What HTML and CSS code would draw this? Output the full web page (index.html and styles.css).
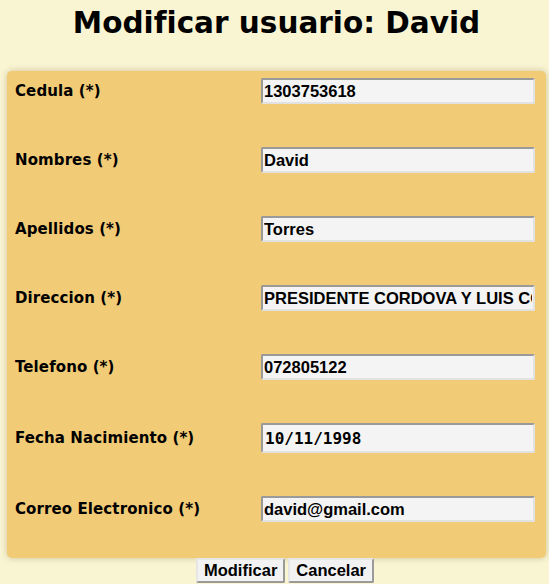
FILE: index.html
```html
<!DOCTYPE html>
<html lang="es">
<head>
<meta charset="utf-8">
<title>Modificar usuario</title>
<link rel="stylesheet" href="styles.css">
</head>
<body>
<h1 class="title">Modificar usuario: David</h1>
<form class="panel">
  <div class="row"><label class="lbl">Cedula (*)</label><input class="field" type="text" value="1303753618"></div>
  <div class="row"><label class="lbl">Nombres (*)</label><input class="field" type="text" value="David"></div>
  <div class="row"><label class="lbl">Apellidos (*)</label><input class="field" type="text" value="Torres"></div>
  <div class="row"><label class="lbl">Direccion (*)</label><input class="field" type="text" value="PRESIDENTE CORDOVA Y LUIS CORDERO"></div>
  <div class="row"><label class="lbl">Telefono (*)</label><input class="field" type="text" value="072805122"></div>
  <div class="row"><label class="lbl">Fecha Nacimiento (*)</label><input class="field date" type="text" value="10/11/1998"></div>
  <div class="row"><label class="lbl">Correo Electronico (*)</label><input class="field" type="text" value="david@gmail.com"></div>
</form>
<div class="actions">
  <button class="btn" type="button">Modificar</button>
  <button class="btn" type="button">Cancelar</button>
</div>
</body>
</html>
```
FILE: styles.css
```css
html, body {
  margin: 0;
  padding: 0;
}
body {
  background: #f9f4d2;
  font-family: "DejaVu Sans", Verdana, sans-serif;
  color: #000;
  padding: 0 3px 0 7px;
}
.title {
  margin: 0;
  padding-top: 5px;
  height: 66px;
  font-size: 29.5px;
  font-weight: bold;
  text-align: center;
  line-height: 36px;
}
.panel {
  background: #f1cb76;
  border-radius: 5px;
  box-shadow: 0 0 6px rgba(120, 100, 40, 0.35);
  padding: 7px 11px 36px 8px;
  display: flex;
  flex-direction: column;
  gap: 43px;
}
.row {
  display: grid;
  grid-template-columns: 246px 1fr;
  align-items: center;
}
.lbl {
  font-size: 15px;
  font-weight: bold;
  letter-spacing: 0.1px;
}
.field {
  box-sizing: border-box;
  width: 274px;
  height: 26px;
  margin: 0;
  padding: 0 1px;
  background: #f4f4f4;
  border: 2px solid #e2e2e2;
  border-top-color: #9a9a9a;
  border-left-color: #9a9a9a;
  border-radius: 2px;
  font-family: "Liberation Sans", Arial, sans-serif;
  font-weight: bold;
  font-size: 16.5px;
  color: #000;
}
.date {
  height: 30px;
  padding-left: 2px;
  font-family: "DejaVu Sans Mono", monospace;
  font-size: 16px;
}
.actions {
  display: flex;
  justify-content: center;
  gap: 3px;
  padding-left: 17px;
  margin-top: 0;
}
.btn {
  box-sizing: border-box;
  height: 25px;
  margin: 0;
  padding: 0 6px;
  background: #f2f2f2;
  border: 2px solid #9a9a9a;
  border-top-color: #e6e6e6;
  border-left-color: #e6e6e6;
  border-radius: 2px;
  font-family: "Liberation Sans", Arial, sans-serif;
  font-weight: bold;
  font-size: 16.5px;
  line-height: 21px;
  color: #000;
}
```
